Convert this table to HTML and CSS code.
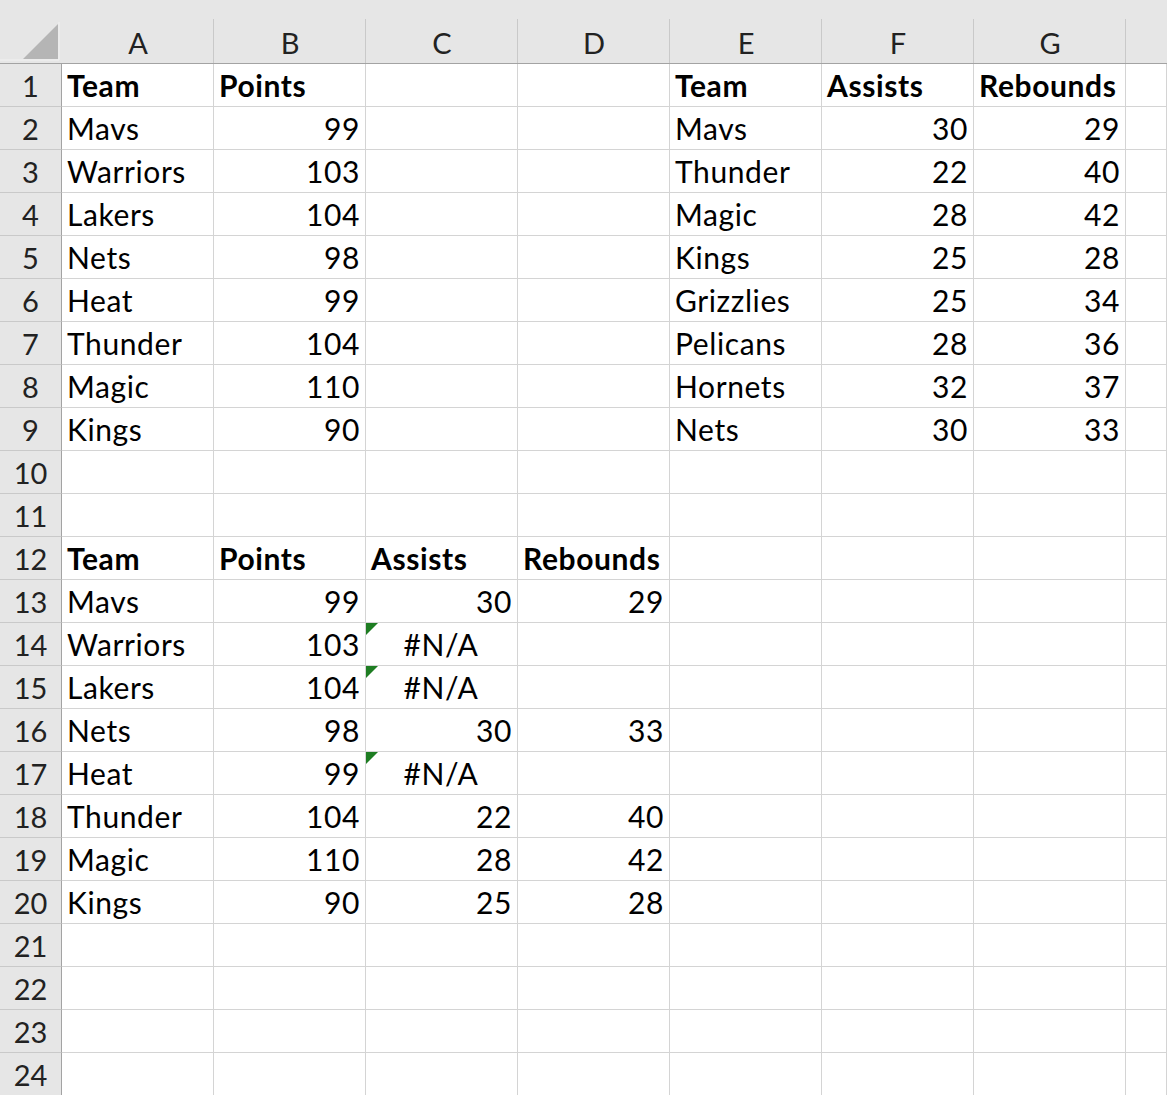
FILE: index.html
```html
<!DOCTYPE html>
<html>
<head>
<meta charset="utf-8">
<link rel="stylesheet" href="styles.css">
</head>
<body>
<div class="sheet">
  <div class="row head">
    <div class="corner"><svg width="62" height="63" viewBox="0 0 62 63"><polyline points="59,22 59,60 0,60" fill="none" stroke="#f2f2f2" stroke-width="1"/><polygon points="58,24 58,59 23,59" fill="#b5b5b5"/></svg></div>
    <div class="ch">A</div><div class="ch">B</div><div class="ch">C</div><div class="ch">D</div><div class="ch">E</div><div class="ch">F</div><div class="ch">G</div><div class="ch last"></div>
  </div>
  <div class="row"><div class="rh">1</div><div class="c b">Team</div><div class="c b">Points</div><div class="c"></div><div class="c"></div><div class="c b">Team</div><div class="c b">Assists</div><div class="c b">Rebounds</div><div class="c"></div></div>
  <div class="row"><div class="rh">2</div><div class="c">Mavs</div><div class="c n">99</div><div class="c"></div><div class="c"></div><div class="c">Mavs</div><div class="c n">30</div><div class="c n">29</div><div class="c"></div></div>
  <div class="row"><div class="rh">3</div><div class="c">Warriors</div><div class="c n">103</div><div class="c"></div><div class="c"></div><div class="c">Thunder</div><div class="c n">22</div><div class="c n">40</div><div class="c"></div></div>
  <div class="row"><div class="rh">4</div><div class="c">Lakers</div><div class="c n">104</div><div class="c"></div><div class="c"></div><div class="c">Magic</div><div class="c n">28</div><div class="c n">42</div><div class="c"></div></div>
  <div class="row"><div class="rh">5</div><div class="c">Nets</div><div class="c n">98</div><div class="c"></div><div class="c"></div><div class="c">Kings</div><div class="c n">25</div><div class="c n">28</div><div class="c"></div></div>
  <div class="row"><div class="rh">6</div><div class="c">Heat</div><div class="c n">99</div><div class="c"></div><div class="c"></div><div class="c">Grizzlies</div><div class="c n">25</div><div class="c n">34</div><div class="c"></div></div>
  <div class="row"><div class="rh">7</div><div class="c">Thunder</div><div class="c n">104</div><div class="c"></div><div class="c"></div><div class="c">Pelicans</div><div class="c n">28</div><div class="c n">36</div><div class="c"></div></div>
  <div class="row"><div class="rh">8</div><div class="c">Magic</div><div class="c n">110</div><div class="c"></div><div class="c"></div><div class="c">Hornets</div><div class="c n">32</div><div class="c n">37</div><div class="c"></div></div>
  <div class="row"><div class="rh">9</div><div class="c">Kings</div><div class="c n">90</div><div class="c"></div><div class="c"></div><div class="c">Nets</div><div class="c n">30</div><div class="c n">33</div><div class="c"></div></div>
  <div class="row"><div class="rh">10</div><div class="c"></div><div class="c"></div><div class="c"></div><div class="c"></div><div class="c"></div><div class="c"></div><div class="c"></div><div class="c"></div></div>
  <div class="row"><div class="rh">11</div><div class="c"></div><div class="c"></div><div class="c"></div><div class="c"></div><div class="c"></div><div class="c"></div><div class="c"></div><div class="c"></div></div>
  <div class="row"><div class="rh">12</div><div class="c b">Team</div><div class="c b">Points</div><div class="c b">Assists</div><div class="c b">Rebounds</div><div class="c"></div><div class="c"></div><div class="c"></div><div class="c"></div></div>
  <div class="row"><div class="rh">13</div><div class="c">Mavs</div><div class="c n">99</div><div class="c n">30</div><div class="c n">29</div><div class="c"></div><div class="c"></div><div class="c"></div><div class="c"></div></div>
  <div class="row"><div class="rh">14</div><div class="c">Warriors</div><div class="c n">103</div><div class="c err">#N/A</div><div class="c"></div><div class="c"></div><div class="c"></div><div class="c"></div><div class="c"></div></div>
  <div class="row"><div class="rh">15</div><div class="c">Lakers</div><div class="c n">104</div><div class="c err">#N/A</div><div class="c"></div><div class="c"></div><div class="c"></div><div class="c"></div><div class="c"></div></div>
  <div class="row"><div class="rh">16</div><div class="c">Nets</div><div class="c n">98</div><div class="c n">30</div><div class="c n">33</div><div class="c"></div><div class="c"></div><div class="c"></div><div class="c"></div></div>
  <div class="row"><div class="rh">17</div><div class="c">Heat</div><div class="c n">99</div><div class="c err">#N/A</div><div class="c"></div><div class="c"></div><div class="c"></div><div class="c"></div><div class="c"></div></div>
  <div class="row"><div class="rh">18</div><div class="c">Thunder</div><div class="c n">104</div><div class="c n">22</div><div class="c n">40</div><div class="c"></div><div class="c"></div><div class="c"></div><div class="c"></div></div>
  <div class="row"><div class="rh">19</div><div class="c">Magic</div><div class="c n">110</div><div class="c n">28</div><div class="c n">42</div><div class="c"></div><div class="c"></div><div class="c"></div><div class="c"></div></div>
  <div class="row"><div class="rh">20</div><div class="c">Kings</div><div class="c n">90</div><div class="c n">25</div><div class="c n">28</div><div class="c"></div><div class="c"></div><div class="c"></div><div class="c"></div></div>
  <div class="row"><div class="rh">21</div><div class="c"></div><div class="c"></div><div class="c"></div><div class="c"></div><div class="c"></div><div class="c"></div><div class="c"></div><div class="c"></div></div>
  <div class="row"><div class="rh">22</div><div class="c"></div><div class="c"></div><div class="c"></div><div class="c"></div><div class="c"></div><div class="c"></div><div class="c"></div><div class="c"></div></div>
  <div class="row"><div class="rh">23</div><div class="c"></div><div class="c"></div><div class="c"></div><div class="c"></div><div class="c"></div><div class="c"></div><div class="c"></div><div class="c"></div></div>
  <div class="row"><div class="rh">24</div><div class="c"></div><div class="c"></div><div class="c"></div><div class="c"></div><div class="c"></div><div class="c"></div><div class="c"></div><div class="c"></div></div>
</div>
</body>
</html>
```

FILE: styles.css
```css
html, body {
  margin: 0;
  padding: 0;
  background: #ffffff;
  overflow: hidden;
}
.sheet {
  width: 1167px;
  font-family: Lato, "Liberation Sans", sans-serif;
  color: #000;
}
.row {
  display: grid;
  grid-template-columns: 62px repeat(7, 152px) 1fr;
  grid-template-rows: 43px;
  height: 43px;
}
.row.head {
  grid-template-rows: 64px;
  height: 64px;
  background: #e6e6e6;
}
.corner {
  box-sizing: border-box;
  border-bottom: 1px solid #a3a3a3;
  height: 64px;
}
.corner svg { display: block; }
.ch {
  box-sizing: border-box;
  height: 64px;
  border-bottom: 1px solid #a3a3a3;
  background: linear-gradient(#c9c9c9, #c9c9c9) right bottom / 1px 44px no-repeat;
  display: flex;
  align-items: flex-end;
  justify-content: center;
  font-size: 29px;
  line-height: 36px;
  padding-bottom: 2px;
  color: #222;
}
.ch.last { background: none; }
.rh {
  box-sizing: border-box;
  height: 43px;
  background: #e6e6e6;
  border-right: 1px solid #a3a3a3;
  border-bottom: 1px solid #c9c9c9;
  font-size: 29px;
  line-height: 41px;
  padding-top: 1px;
  text-align: center;
  color: #222;
}
.c {
  box-sizing: border-box;
  height: 43px;
  border-right: 1px solid #d4d4d4;
  border-bottom: 1px solid #d4d4d4;
  font-size: 30px;
  letter-spacing: 0.6px;
  line-height: 41px;
  padding: 1px 6px 0 5px;
  white-space: nowrap;
  position: relative;
}
.c.b { font-weight: 700; }
.c.n { text-align: right; padding-right: 5px; }
.c.err { text-align: center; }
.c.err::before {
  content: "";
  position: absolute;
  left: 0;
  top: 0;
  width: 0;
  height: 0;
  border-top: 12px solid #1e7d22;
  border-right: 12px solid transparent;
}
```
